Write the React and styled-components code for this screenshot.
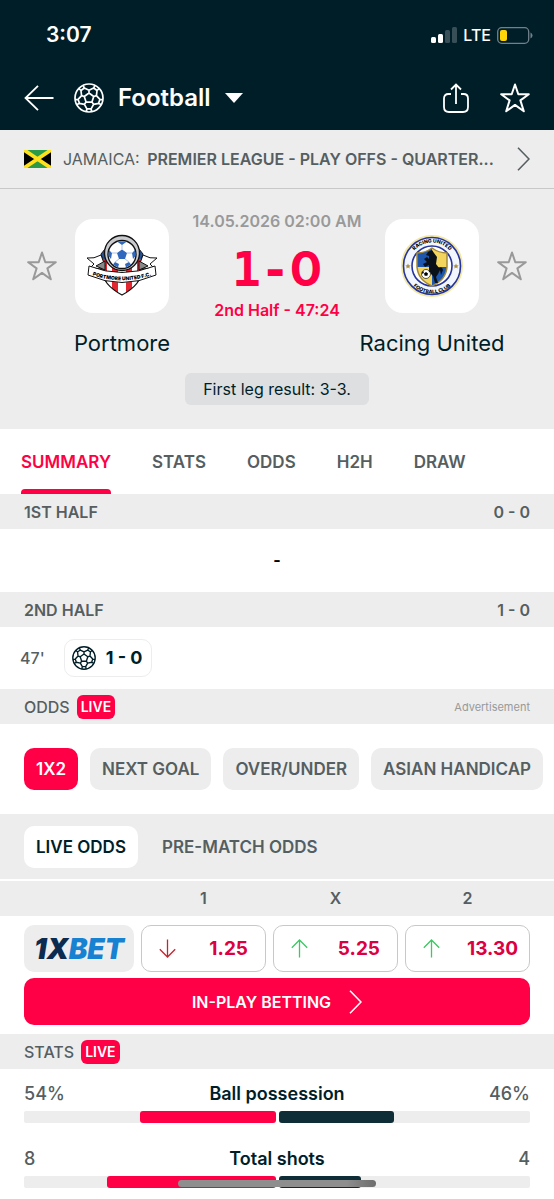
import React from "react"
import styled, { createGlobalStyle } from "styled-components"

const Colors = {
    navy: "#001e28",
    navy_lt: "#0f2d37",
    red: "#ff0046",
    red_dk: "#dc0041",
    grey: "#ededed",
    grey_md: "#dddfe1",
    line: "#c8c8c8",
    text: "#555e61",
    muted: "#999999",
    green: "#3cc864",
    down: "#c8232d",
}

const GlobalStyle = createGlobalStyle`
    * {
        box-sizing: border-box;
    }
    body {
        margin: 0;
        background: white;
        color: ${Colors.navy};
        font-family: Inter, "Liberation Sans", sans-serif;
        font-size: 16px;
        line-height: 20px;
    }
    button {
        margin: 0;
        padding: 0;
        border: 0;
        background: none;
        color: inherit;
        font: inherit;
        cursor: pointer;
    }
    a {
        color: inherit;
        text-decoration: none;
    }
    svg {
        display: block;
        flex: none;
    }
`

const Page = styled.div`
    position: relative;
    overflow: hidden;
    padding-bottom: 11px;
`

const Header = styled.header`
    background: ${Colors.navy};
    color: white;
`

const StatusBar = styled.div`
    display: flex;
    align-items: center;
    justify-content: space-between;
    height: 66px;
    padding: 4px 21px 0 46px;
`

const Clock = styled.span`
    font-size: 21px;
    font-weight: 600;
`

const Signals = styled.div`
    display: flex;
    align-items: center;
    gap: 6px;
    font-size: 16px;
    font-weight: 500;
`

const AppBar = styled.div`
    display: flex;
    align-items: center;
    gap: 20px;
    height: 64px;
    padding: 0 24px;
`

const SportButton = styled.button`
    display: flex;
    align-items: center;
    gap: 14px;
    margin-right: auto;
    font-size: 24px;
    font-weight: 600;
    line-height: 30px;
`

const Actions = styled.div`
    display: flex;
    gap: 30px;
`

const League = styled.a`
    display: flex;
    align-items: center;
    gap: 12px;
    height: 59px;
    padding: 0 24px;
    border-bottom: 1px solid ${Colors.line};
    background: ${Colors.grey};
    color: ${Colors.text};
`

const LeagueName = styled.span`
    flex: 1;
    overflow: hidden;
    white-space: nowrap;

    & b {
        margin-left: 3px;
        font-weight: 600;
    }
`

const Hero = styled.section`
    display: flex;
    flex-direction: column;
    align-items: center;
    padding: 22px 27px 24px;
    background: ${Colors.grey};
`

const Match = styled.div`
    display: grid;
    grid-template-columns: 30px 130px 1fr 130px 30px;
    width: 100%;
    margin-bottom: 16px;
`

const Favourite = styled.button`
    align-self: start;
    margin-top: 40px;
    color: ${Colors.muted};
`

const Team = styled.a`
    display: flex;
    flex-direction: column;
    align-items: center;
    gap: 16px;
    margin-top: 8px;
    font-size: 22px;
    line-height: 28px;
    white-space: nowrap;
`

const Crest = styled.span`
    width: 94px;
    height: 94px;
    border-radius: 18px;
    background: white;
`

const Result = styled.div`
    display: flex;
    flex-direction: column;
    align-items: center;
    white-space: nowrap;
    font-weight: 600;
`

const Kickoff = styled.span`
    color: ${Colors.muted};
`

const Score = styled.div`
    display: flex;
    align-items: center;
    margin: 16px 0 10px;
    color: ${Colors.red};
    font-family: "DejaVu Sans Mono", monospace;
    font-size: 48px;
    font-weight: 700;
    line-height: 44px;

    & span:last-child {
        font-family: Inter, sans-serif;
    }
`

const Stage = styled.span`
    color: ${Colors.red};
    line-height: 18px;
`

const FirstLeg = styled.span`
    padding: 6px 18px;
    border-radius: 6px;
    background: ${Colors.grey_md};
`

const Tabs = styled.nav`
    display: flex;
    gap: 41px;
    height: 65px;
    padding: 0 21px;
`

const Tab = styled.a`
    display: flex;
    flex-direction: column;
    justify-content: space-between;
    color: ${p => (p.$active ? Colors.red : Colors.text)};
    font-size: 17px;
    font-weight: 600;

    &::before,
    &::after {
        content: "";
        height: 5px;
    }
    &::after {
        border-radius: 4px 4px 0 0;
        background: ${p => (p.$active ? Colors.red : "transparent")};
    }
`

const SectionBar = styled.h2`
    display: flex;
    align-items: center;
    gap: 7px;
    height: 35px;
    margin: 0;
    padding: 0 24px;
    background: ${Colors.grey};
    color: ${Colors.text};
    font-size: 16px;
    font-weight: ${p => (p.$light ? 500 : 600)};
`

const BarEnd = styled.span`
    margin-left: auto;
`

const Advert = styled(BarEnd)`
    color: ${Colors.muted};
    font-size: 11px;
    font-weight: 400;
`

const Live = styled.span`
    padding: 2px 4px;
    border-radius: 6px;
    background: ${Colors.red};
    color: white;
    font-size: 14px;
    font-weight: 600;
`

const NoEvents = styled.p`
    margin: 0;
    padding: 21px 0 22px;
    color: black;
    font-weight: 700;
    text-align: center;
`

const Event = styled.div`
    display: flex;
    align-items: center;
    gap: 19px;
    padding: 12px 20px;
    color: ${Colors.text};
    font-weight: 500;
`

const Goal = styled.span`
    display: flex;
    align-items: center;
    gap: 10px;
    height: 38px;
    padding: 0 8px 0 7px;
    border: 1px solid ${Colors.grey};
    border-radius: 10px;
    color: ${Colors.navy};
    font-size: 18px;
    font-weight: 700;
`

const Chips = styled.div`
    display: flex;
    gap: 12px;
    overflow: hidden;
    padding: 24px;
`

const Chip = styled.button`
    flex: none;
    height: 42px;
    padding: 0 12px;
    border-radius: 10px;
    background: ${p => (p.$active ? Colors.red : Colors.grey)};
    color: ${p => (p.$active ? "white" : Colors.text)};
    font-size: 17px;
    font-weight: 600;
`

const OddsTypes = styled.div`
    display: flex;
    gap: 12px;
    padding: 12px 24px 11px;
    border-bottom: 2px solid white;
    background: ${Colors.grey};
`

const OddsType = styled(Chip)`
    background: ${p => (p.$active ? "white" : "transparent")};
    color: ${p => (p.$active ? Colors.navy : Colors.text)};
`

const OddsTable = styled.table`
    display: block;

    & thead,
    & tbody {
        display: block;
    }
    & thead {
        background: ${Colors.grey};
        color: ${Colors.text};
    }
    & tr {
        display: grid;
        grid-template-columns: 110px repeat(3, 1fr);
        gap: 7px;
        padding: 0 24px;
    }
    & th {
        padding: 0;
        font-weight: 600;
        line-height: 35px;
    }
    & td {
        padding: 9px 0 6px;
    }
`

const Bookmaker = styled.a`
    display: flex;
    align-items: center;
    justify-content: center;
    height: 47px;
    border-radius: 10px;
    background: ${Colors.grey};
    color: #0c2b50;
    font-size: 28px;
    font-style: italic;
    font-weight: 900;

    & span {
        color: #1782d2;
    }
`

const Odd = styled.button`
    display: flex;
    align-items: center;
    justify-content: space-between;
    width: 100%;
    height: 47px;
    padding: 0 ${p => (p.$wide ? 11 : 17)}px 0 17px;
    border: 1px solid ${Colors.line};
    border-radius: 10px;
    color: ${Colors.red_dk};
    font-size: 19px;
    font-weight: 700;
`

const InPlay = styled.a`
    display: flex;
    align-items: center;
    justify-content: center;
    gap: 18px;
    height: 47px;
    margin: 0 24px 9px;
    border-radius: 10px;
    background: ${Colors.red};
    color: white;
    font-weight: 600;
`

const Stat = styled.div`
    display: grid;
    grid-template-columns: 1fr auto 1fr;
    row-gap: 6px;
    padding: 14px 24px 0;
    font-size: 18px;
    line-height: 22px;

    & + & {
        padding-top: 25px;
    }
`

const StatValue = styled.span`
    color: ${Colors.text};
    font-weight: 500;
    text-align: ${p => (p.$away ? "right" : "left")};
`

const StatName = styled.span`
    font-weight: 600;
`

const Bars = styled.div`
    display: grid;
    grid-column: 1 / -1;
    grid-template-columns: 1fr 1fr;
    gap: 3px;
`

const Track = styled.div`
    display: flex;
    justify-content: ${p => (p.$away ? "flex-start" : "flex-end")};
    height: 12px;
    border-radius: 2px;
    background: ${Colors.grey};
`

const Fill = styled.div`
    border-radius: 3px;
    background: ${p => (p.$away ? Colors.navy_lt : Colors.red)};
`

const HomeIndicator = styled.div`
    position: absolute;
    bottom: 12px;
    left: 50%;
    width: 198px;
    height: 7px;
    border-radius: 4px;
    background: linear-gradient(90deg, #8e8e8e 85%, #6c6c6c);
    transform: translateX(-50%);
`

const at = (r, deg) => {
    const a = ((deg - 90) * Math.PI) / 180
    return `${(15 + r * Math.cos(a)).toFixed(2)} ${(15 + r * Math.sin(a)).toFixed(2)}`
}

// five seams round a centre pentagon
const seams = [0, 72, 144, 216, 288]
    .map(
        d =>
            `M${at(5, d)}L${at(5, d + 72)}M${at(5, d)}L${at(7.8, d)}` +
            `M${at(14, d - 25)}L${at(11, d - 25)}L${at(7.8, d)}L${at(11, d + 25)}L${at(14, d + 25)}` +
            `M${at(11, d + 25)}L${at(11, d + 47)}`
    )
    .join("")

const Ball = ({ size }) => (
    <svg width={size} height={size} viewBox="0 0 30 30" fill="none" stroke="currentColor" strokeWidth="1.7" strokeLinejoin="round">
        <circle cx="15" cy="15" r="14" />
        <path d={seams} />
    </svg>
)

const Star = ({ width = 2 }) => (
    <svg width="30" height="30" viewBox="0 0 30 30" fill="none" stroke="currentColor" strokeWidth={width} strokeLinejoin="round">
        <path d="M15 1.5 18.3 11.2H28.8L20.4 17.4 23.8 28.3 15 21.9 6.2 28.3 9.6 17.4 1.2 11.2H11.7Z" />
    </svg>
)

const Chevron = () => (
    <svg width="13" height="24" viewBox="0 0 13 24" fill="none" stroke="currentColor" strokeWidth="1.6">
        <path d="M1 .8 12 12 1 23.2" />
    </svg>
)

const Trend = ({ up }) => (
    <svg width="17" height="19" viewBox="0 0 17 19" fill="none" stroke={up ? Colors.green : Colors.down} strokeWidth="1.3">
        <path d={up ? "M8.5 18.5V1M.8 8.7 8.5 1l7.7 7.7" : "M8.5.5V18M.8 10.3 8.5 18l7.7-7.7"} />
    </svg>
)

const Flag = () => (
    <svg width="27" height="18" viewBox="0 0 27 18">
        <path fill="#2d9a48" d="M0 0h27v18H0z" />
        <path d="M0 0v18L13.5 9zM27 0v18L13.5 9z" />
        <path stroke="#ffe01c" strokeWidth="3.8" d="M0 0l27 18M27 0 0 18" />
    </svg>
)

const PortmoreCrest = () => (
    <svg width="94" height="94" viewBox="0 0 94 94">
        <defs>
            <clipPath id="shield">
                <path d="M26 40H68V50Q66 66 47 76Q28 66 26 50Z" />
            </clipPath>
            <path id="ribbonText" d="M15 55.5Q47 67 79 55.5" />
        </defs>
        <path fill="#24539c" stroke="#111" d="M30 30 26 35 28 42 30 48H64L66 42 68 35 64 30Z" />
        <g clipPath="url(#shield)">
            <path fill="#fff" d="M26 38h42v40H26z" />
            <path fill="#e3262f" d="M26 38h6v40h-6zM37 38h6v40h-6zM51 38h6v40h-6zM62 38h6v40h-6z" />
        </g>
        <path fill="none" stroke="#111" strokeWidth="1.2" d="M26 45V50Q28 66 47 76Q66 66 68 50V45" />
        <path fill="#fff" stroke="#111" d="M12 39Q19 40 26 36L30 47Q24 51 15 49L19 45ZM82 39Q75 40 68 36L64 47Q70 51 79 49L75 45Z" />
        <path fill="#888" stroke="#111" d="M21 47 30 42 30 51ZM73 47 64 42 64 51Z" />
        <circle cx="47" cy="34" r="17.5" fill="#c9cbce" stroke="#111" strokeWidth="1.4" />
        <circle cx="47" cy="35.5" r="14" fill="#fff" stroke="#111" strokeWidth="1.4" />
        <path fill="#2f68bd" d="M47 30.5 52 34 50 40H44L42 34ZM42 22.5 52 22.5 47 26ZM60 31 57 34 58 40 60.5 37ZM34 31 37 34 36 40 33.5 37ZM40 43 44 45 43 48.5 38 45.5ZM54 43 50 45 51 48.5 56 45.5Z" />
        <path stroke="#8aa9d8" strokeWidth=".7" d="M47 26v4.5M52 34l5 0M42 34h-5M50 40l4 3M44 40l-4 3" />
        <path fill="#fff" stroke="#111" d="M14 47Q47 60 80 47L81 56Q47 71 13 56Z" />
        <text fontFamily="Inter, sans-serif" fontSize="5" fontWeight="900" textAnchor="middle">
            <textPath href="#ribbonText" startOffset="50%">PORTMORE UNITED F.C.</textPath>
        </text>
    </svg>
)

const RacingCrest = () => (
    <svg width="94" height="94" viewBox="0 0 94 94">
        <defs>
            <path id="topText" d="M23.5 47A23.5 23.5 0 0 1 70.5 47" />
            <path id="bottomText" d="M19.5 47A27.5 27.5 0 0 0 74.5 47" />
            <clipPath id="quarters">
                <path d="M32 34Q40 34 47 29Q54 34 62 34V48Q61 61 47 67Q33 61 32 48Z" />
            </clipPath>
        </defs>
        <circle cx="47" cy="47" r="30" fill="#f1f6ff" stroke="#f1e7a0" strokeWidth="2" />
        <circle cx="47" cy="47" r="28.5" fill="none" stroke="#26339a" strokeWidth="1.6" />
        <circle cx="47" cy="47" r="20" fill="#fff" stroke="#26339a" strokeWidth="1.6" />
        <g clipPath="url(#quarters)">
            <path fill="#1c56ad" d="M30 28h17v20H30zM47 48h17v20H47z" />
            <path fill="#f3d45d" d="M47 28h17v20H47zM30 48h17v20H30z" />
        </g>
        <path fill="none" stroke="#a3883a" strokeWidth="1.5" d="M32 34Q40 34 47 29Q54 34 62 34V48Q61 61 47 67Q33 61 32 48Z" />
        <path fill="#0b1118" d="M47 31 49 34 52 38 51 45 54 49Q57 47 58 51L56 56 55 51 53 55 51 58 53 64H50L48 57 44 53 44 46 40 48 38 45 42 43 39 40 42 38 44 40 44 37 41 36 43 33Z" />
        <circle cx="41" cy="55" r="4.5" fill="#fff" stroke="#111" strokeWidth=".7" />
        <path d="M41 53l2 1.5-.7 2.3h-2.6L39 54.5zM37 53l1.5-1 .3 2-1.5 1zM44 51.5l1.2 1.5-1.4.3z" />
        <path fill="#a98f3e" d="M23 44.5l.8 1.7 1.9.2-1.4 1.3.4 1.9-1.7-1-1.7 1 .4-1.9-1.4-1.3 1.9-.2zM71 44.5l.8 1.7 1.9.2-1.4 1.3.4 1.9-1.7-1-1.7 1 .4-1.9-1.4-1.3 1.9-.2z" />
        <g fontFamily="Inter, sans-serif" fontSize="5" fontWeight="800" textAnchor="middle">
            <text>
                <textPath href="#topText" startOffset="50%">RACING UNITED</textPath>
            </text>
            <text>
                <textPath href="#bottomText" startOffset="50%">FOOTBALL CLUB</textPath>
            </text>
        </g>
    </svg>
)

const odds = [
    { value: "1.25", up: false },
    { value: "5.25", up: true },
    { value: "13.30", up: true },
]

const stats = [
    { name: "Ball possession", home: "54%", away: "46%", homeShare: 54, awayShare: 46 },
    { name: "Total shots", home: "8", away: "4", homeShare: 67, awayShare: 33 },
]

const App = () => (
    <Page>
        <GlobalStyle />
        <Header>
            <StatusBar>
                <Clock>3:07</Clock>
                <Signals>
                    <svg width="26" height="16" viewBox="0 0 26 16" fill="white">
                        <rect y="10" width="5" height="6" rx="1.5" />
                        <rect x="7" y="7" width="5" height="9" rx="1.5" />
                        <rect x="14" y="3" width="5" height="13" rx="1.5" opacity=".22" />
                        <rect x="21" width="5" height="16" rx="1.5" opacity=".22" />
                    </svg>
                    LTE
                    <svg width="36" height="17" viewBox="0 0 36 17">
                        <rect x=".7" y=".7" width="31" height="15.6" rx="4" fill="none" stroke="#71818a" strokeWidth="1.3" />
                        <rect x="3" y="3" width="7" height="11" rx="2" fill="#ffd60a" />
                        <path d="M33.5 5.5q2 .8 2 3t-2 3z" fill="#71818a" />
                    </svg>
                </Signals>
            </StatusBar>
            <AppBar>
                <button aria-label="Back">
                    <svg width="30" height="26" viewBox="0 0 30 26" fill="none" stroke="white" strokeWidth="1.8">
                        <path d="M29.5 13H1.5M14 .8 1.5 13 14 25.2" />
                    </svg>
                </button>
                <SportButton>
                    <Ball size={30} />
                    Football
                    <svg width="18" height="10" viewBox="0 0 18 10" fill="white">
                        <path d="M0 0h18L9 10z" />
                    </svg>
                </SportButton>
                <Actions>
                    <button aria-label="Share">
                        <svg width="28" height="30" viewBox="0 0 28 30" fill="none" stroke="white" strokeWidth="1.8">
                            <path d="M9 11H6.5Q2 11 2 15.5V24Q2 29 7 29H21Q26 29 26 24V15.5Q26 11 21.5 11H19M14 21V2M9 6.5 14 1.5 19 6.5" />
                        </svg>
                    </button>
                    <button aria-label="Add match to favourites">
                        <Star />
                    </button>
                </Actions>
            </AppBar>
        </Header>

        <League href="#league">
            <Flag />
            <LeagueName>
                JAMAICA: <b>PREMIER LEAGUE - PLAY OFFS - QUARTER...</b>
            </LeagueName>
            <Chevron />
        </League>

        <Hero>
            <Match>
                <Favourite aria-label="Follow Portmore">
                    <Star />
                </Favourite>
                <Team href="#portmore">
                    <Crest>
                        <PortmoreCrest />
                    </Crest>
                    Portmore
                </Team>
                <Result>
                    <Kickoff>14.05.2026 02:00 AM</Kickoff>
                    <Score>
                        <span>1</span>
                        <span>-</span>
                        <span>0</span>
                    </Score>
                    <Stage>2nd Half - 47:24</Stage>
                </Result>
                <Team href="#racing-united">
                    <Crest>
                        <RacingCrest />
                    </Crest>
                    Racing United
                </Team>
                <Favourite aria-label="Follow Racing United">
                    <Star />
                </Favourite>
            </Match>
            <FirstLeg>First leg result: 3-3.</FirstLeg>
        </Hero>

        <Tabs>
            <Tab href="#summary" $active>SUMMARY</Tab>
            <Tab href="#stats">STATS</Tab>
            <Tab href="#odds">ODDS</Tab>
            <Tab href="#h2h">H2H</Tab>
            <Tab href="#draw">DRAW</Tab>
        </Tabs>

        <SectionBar>
            1ST HALF
            <BarEnd>0 - 0</BarEnd>
        </SectionBar>
        <NoEvents>-</NoEvents>
        <SectionBar>
            2ND HALF
            <BarEnd>1 - 0</BarEnd>
        </SectionBar>
        <Event>
            47'
            <Goal>
                <Ball size={24} />
                1 - 0
            </Goal>
        </Event>

        <SectionBar $light>
            ODDS
            <Live>LIVE</Live>
            <Advert>Advertisement</Advert>
        </SectionBar>
        <Chips>
            <Chip $active>1X2</Chip>
            <Chip>NEXT GOAL</Chip>
            <Chip>OVER/UNDER</Chip>
            <Chip>ASIAN HANDICAP</Chip>
        </Chips>
        <OddsTypes>
            <OddsType $active>LIVE ODDS</OddsType>
            <OddsType>PRE-MATCH ODDS</OddsType>
        </OddsTypes>
        <OddsTable>
            <thead>
                <tr>
                    <th aria-label="Bookmaker" />
                    <th>1</th>
                    <th>X</th>
                    <th>2</th>
                </tr>
            </thead>
            <tbody>
                <tr>
                    <td>
                        <Bookmaker href="#bookmaker">
                            1X<span>BET</span>
                        </Bookmaker>
                    </td>
                    {odds.map(odd => (
                        <td key={odd.value}>
                            <Odd $wide={odd.value.length > 4}>
                                <Trend up={odd.up} />
                                {odd.value}
                            </Odd>
                        </td>
                    ))}
                </tr>
            </tbody>
        </OddsTable>
        <InPlay href="#in-play">
            IN-PLAY BETTING
            <Chevron />
        </InPlay>

        <SectionBar $light>
            STATS
            <Live>LIVE</Live>
        </SectionBar>
        {stats.map(stat => (
            <Stat key={stat.name}>
                <StatValue>{stat.home}</StatValue>
                <StatName>{stat.name}</StatName>
                <StatValue $away>{stat.away}</StatValue>
                <Bars>
                    <Track>
                        <Fill style={{ width: `${stat.homeShare}%` }} />
                    </Track>
                    <Track $away>
                        <Fill $away style={{ width: `${stat.awayShare}%` }} />
                    </Track>
                </Bars>
            </Stat>
        ))}
        <HomeIndicator />
    </Page>
)

export default App
